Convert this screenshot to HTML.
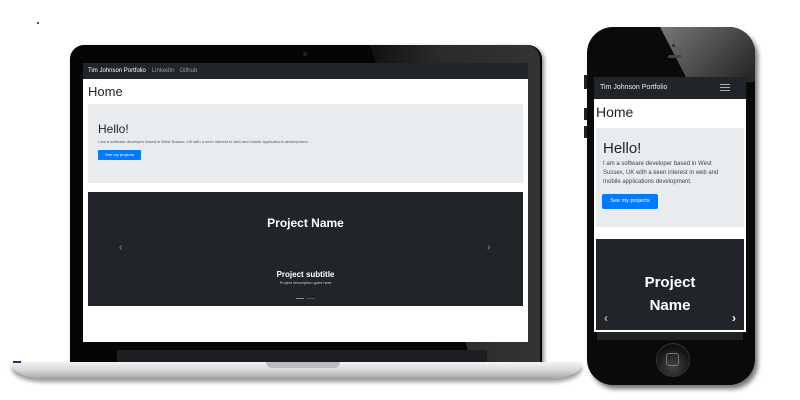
<!DOCTYPE html>
<html><head><style>
body{margin:0;width:800px;height:400px;background:#fff;position:relative;overflow:hidden;font-family:"Liberation Sans",sans-serif}
.a{position:absolute}
</style></head><body>
<div class="a" style="left:37px;top:22px;width:2px;height:2px;background:#555"></div>
<!-- laptop -->
<div class="a" style="left:70px;top:45px;width:472px;height:320px;background:#050505;border-radius:14px 14px 0 0;box-shadow:2px 2px 4px #888"></div>
<div class="a" style="left:370px;top:45px;width:170px;height:318px;background:linear-gradient(90deg,#111,#2a2a2a 40%,#333);clip-path:polygon(0 0,100% 0,100% 100%,60% 100%);border-radius:0 14px 0 0"></div>
<div class="a" style="left:303px;top:52px;width:4px;height:4px;border-radius:50%;background:#223"></div>
<div class="a" style="left:83px;top:63px;width:445px;height:279px;background:#fff"></div>
<div class="a" style="left:83px;top:63px;width:445px;height:16px;background:#212529;color:#ddd;font-size:6px;line-height:16px"><span style="margin-left:5px;color:#fff">Tim Johnson Portfolio</span><span style="margin-left:6px;color:#999">LinkedIn</span><span style="margin-left:5px;color:#999">Github</span></div>
<div class="a" style="left:88px;top:84px;font-size:13px;color:#222">Home</div>
<div class="a" style="left:88px;top:104px;width:435px;height:79px;background:#e9ecef"></div>
<div class="a" style="left:98px;top:122px;font-size:12px;color:#222">Hello!</div>
<div class="a" style="left:98px;top:139px;font-size:4px;color:#555">I am a software developer based in West Sussex, UK with a keen interest in web and mobile applications development.</div>
<div class="a" style="left:98px;top:150px;width:43px;height:10px;background:#007bff;border-radius:1px;color:#fff;font-size:4px;line-height:10px;text-align:center">See my projects</div>
<div class="a" style="left:88px;top:192px;width:435px;height:114px;background:#212529;color:#fff;text-align:center">
<div style="margin-top:24px;font-size:12px;font-weight:bold">Project Name</div>
<div style="margin-top:40px;font-size:8px;font-weight:bold">Project subtitle</div>
<div style="font-size:4px;color:#ccc;margin-top:1px">Project description goes here</div>
<div style="position:absolute;left:208px;top:106px;width:8px;height:1px;background:#888"></div>
<div style="position:absolute;left:219px;top:106px;width:8px;height:1px;background:#555"></div>
<div style="position:absolute;left:31px;top:50px;font-size:10px;color:#999">‹</div>
<div style="position:absolute;left:399px;top:50px;font-size:10px;color:#999">›</div>
</div>
<div class="a" style="left:117px;top:350px;width:370px;height:12px;background:#1c1e22"></div>
<div class="a" style="left:12px;top:362px;width:570px;height:16px;background:linear-gradient(#f4f4f4,#d8d8d8 50%,#aaa);border-radius:2px 2px 30px 30px/2px 2px 14px 14px;box-shadow:0 4px 4px #999"></div>
<div class="a" style="left:266px;top:362px;width:74px;height:6px;background:#bbb;border-radius:0 0 6px 6px"></div>
<div class="a" style="left:13px;top:361px;width:8px;height:2px;background:#236"></div>
<!-- phone -->
<div class="a" style="left:587px;top:27px;width:168px;height:358px;background:#0a0a0a;border-radius:26px;box-shadow:3px 4px 5px #777"></div>
<div class="a" style="left:660px;top:27px;width:95px;height:55px;background:linear-gradient(135deg,#777,#222);clip-path:polygon(0 0,100% 0,100% 100%,30% 100%);border-radius:0 26px 0 0"></div>
<div class="a" style="left:668px;top:55px;width:14px;height:3px;background:#444;border-radius:2px"></div>
<div class="a" style="left:672px;top:44px;width:3px;height:3px;background:#333;border-radius:50%"></div>
<div class="a" style="left:594px;top:77px;width:152px;height:255px;background:#fff"></div>
<div class="a" style="left:594px;top:77px;width:152px;height:22px;background:#212529;color:#eee;font-size:7px;line-height:22px"><span style="margin-left:6px">Tim Johnson Portfolio</span></div>
<div class="a" style="left:720px;top:84px;width:10px;height:1px;background:#aaa;box-shadow:0 3px #aaa,0 6px #aaa"></div>
<div class="a" style="left:596px;top:104px;font-size:14px;color:#222">Home</div>
<div class="a" style="left:596px;top:128px;width:148px;height:99px;background:#e9ecef"></div>
<div class="a" style="left:603px;top:140px;font-size:15px;color:#222">Hello!</div>
<div class="a" style="left:603px;top:160px;width:130px;font-size:6px;line-height:9px;color:#444">I am a software developer based in West Sussex, UK with a keen interest in web and mobile applications development.</div>
<div class="a" style="left:602px;top:194px;width:56px;height:15px;background:#007bff;border-radius:2px;color:#fff;font-size:5.5px;line-height:15px;text-align:center">See my projects</div>
<div class="a" style="left:596px;top:239px;width:148px;height:91px;background:#212529;color:#fff;text-align:center;font-size:15px;font-weight:bold;line-height:23px">
<div style="margin-top:32px">Project<br>Name</div>
<div style="position:absolute;left:8px;top:68px;font-size:12px;color:#aaa">‹</div>
<div style="position:absolute;right:8px;top:68px;font-size:12px">›</div>
</div>
<div class="a" style="left:597px;top:332px;width:146px;height:8px;background:#222"></div>
<div class="a" style="left:656px;top:343px;width:32px;height:32px;border-radius:50%;background:radial-gradient(circle at 50% 70%,#444,#111 70%);border:1px solid #333"></div>
<div class="a" style="left:666px;top:353px;width:11px;height:11px;border:1px solid #777;border-radius:3px"></div>
<div class="a" style="left:584px;top:75px;width:3px;height:14px;background:#222"></div>
<div class="a" style="left:584px;top:108px;width:3px;height:12px;background:#222"></div>
<div class="a" style="left:584px;top:126px;width:3px;height:12px;background:#222"></div>
</body></html>
